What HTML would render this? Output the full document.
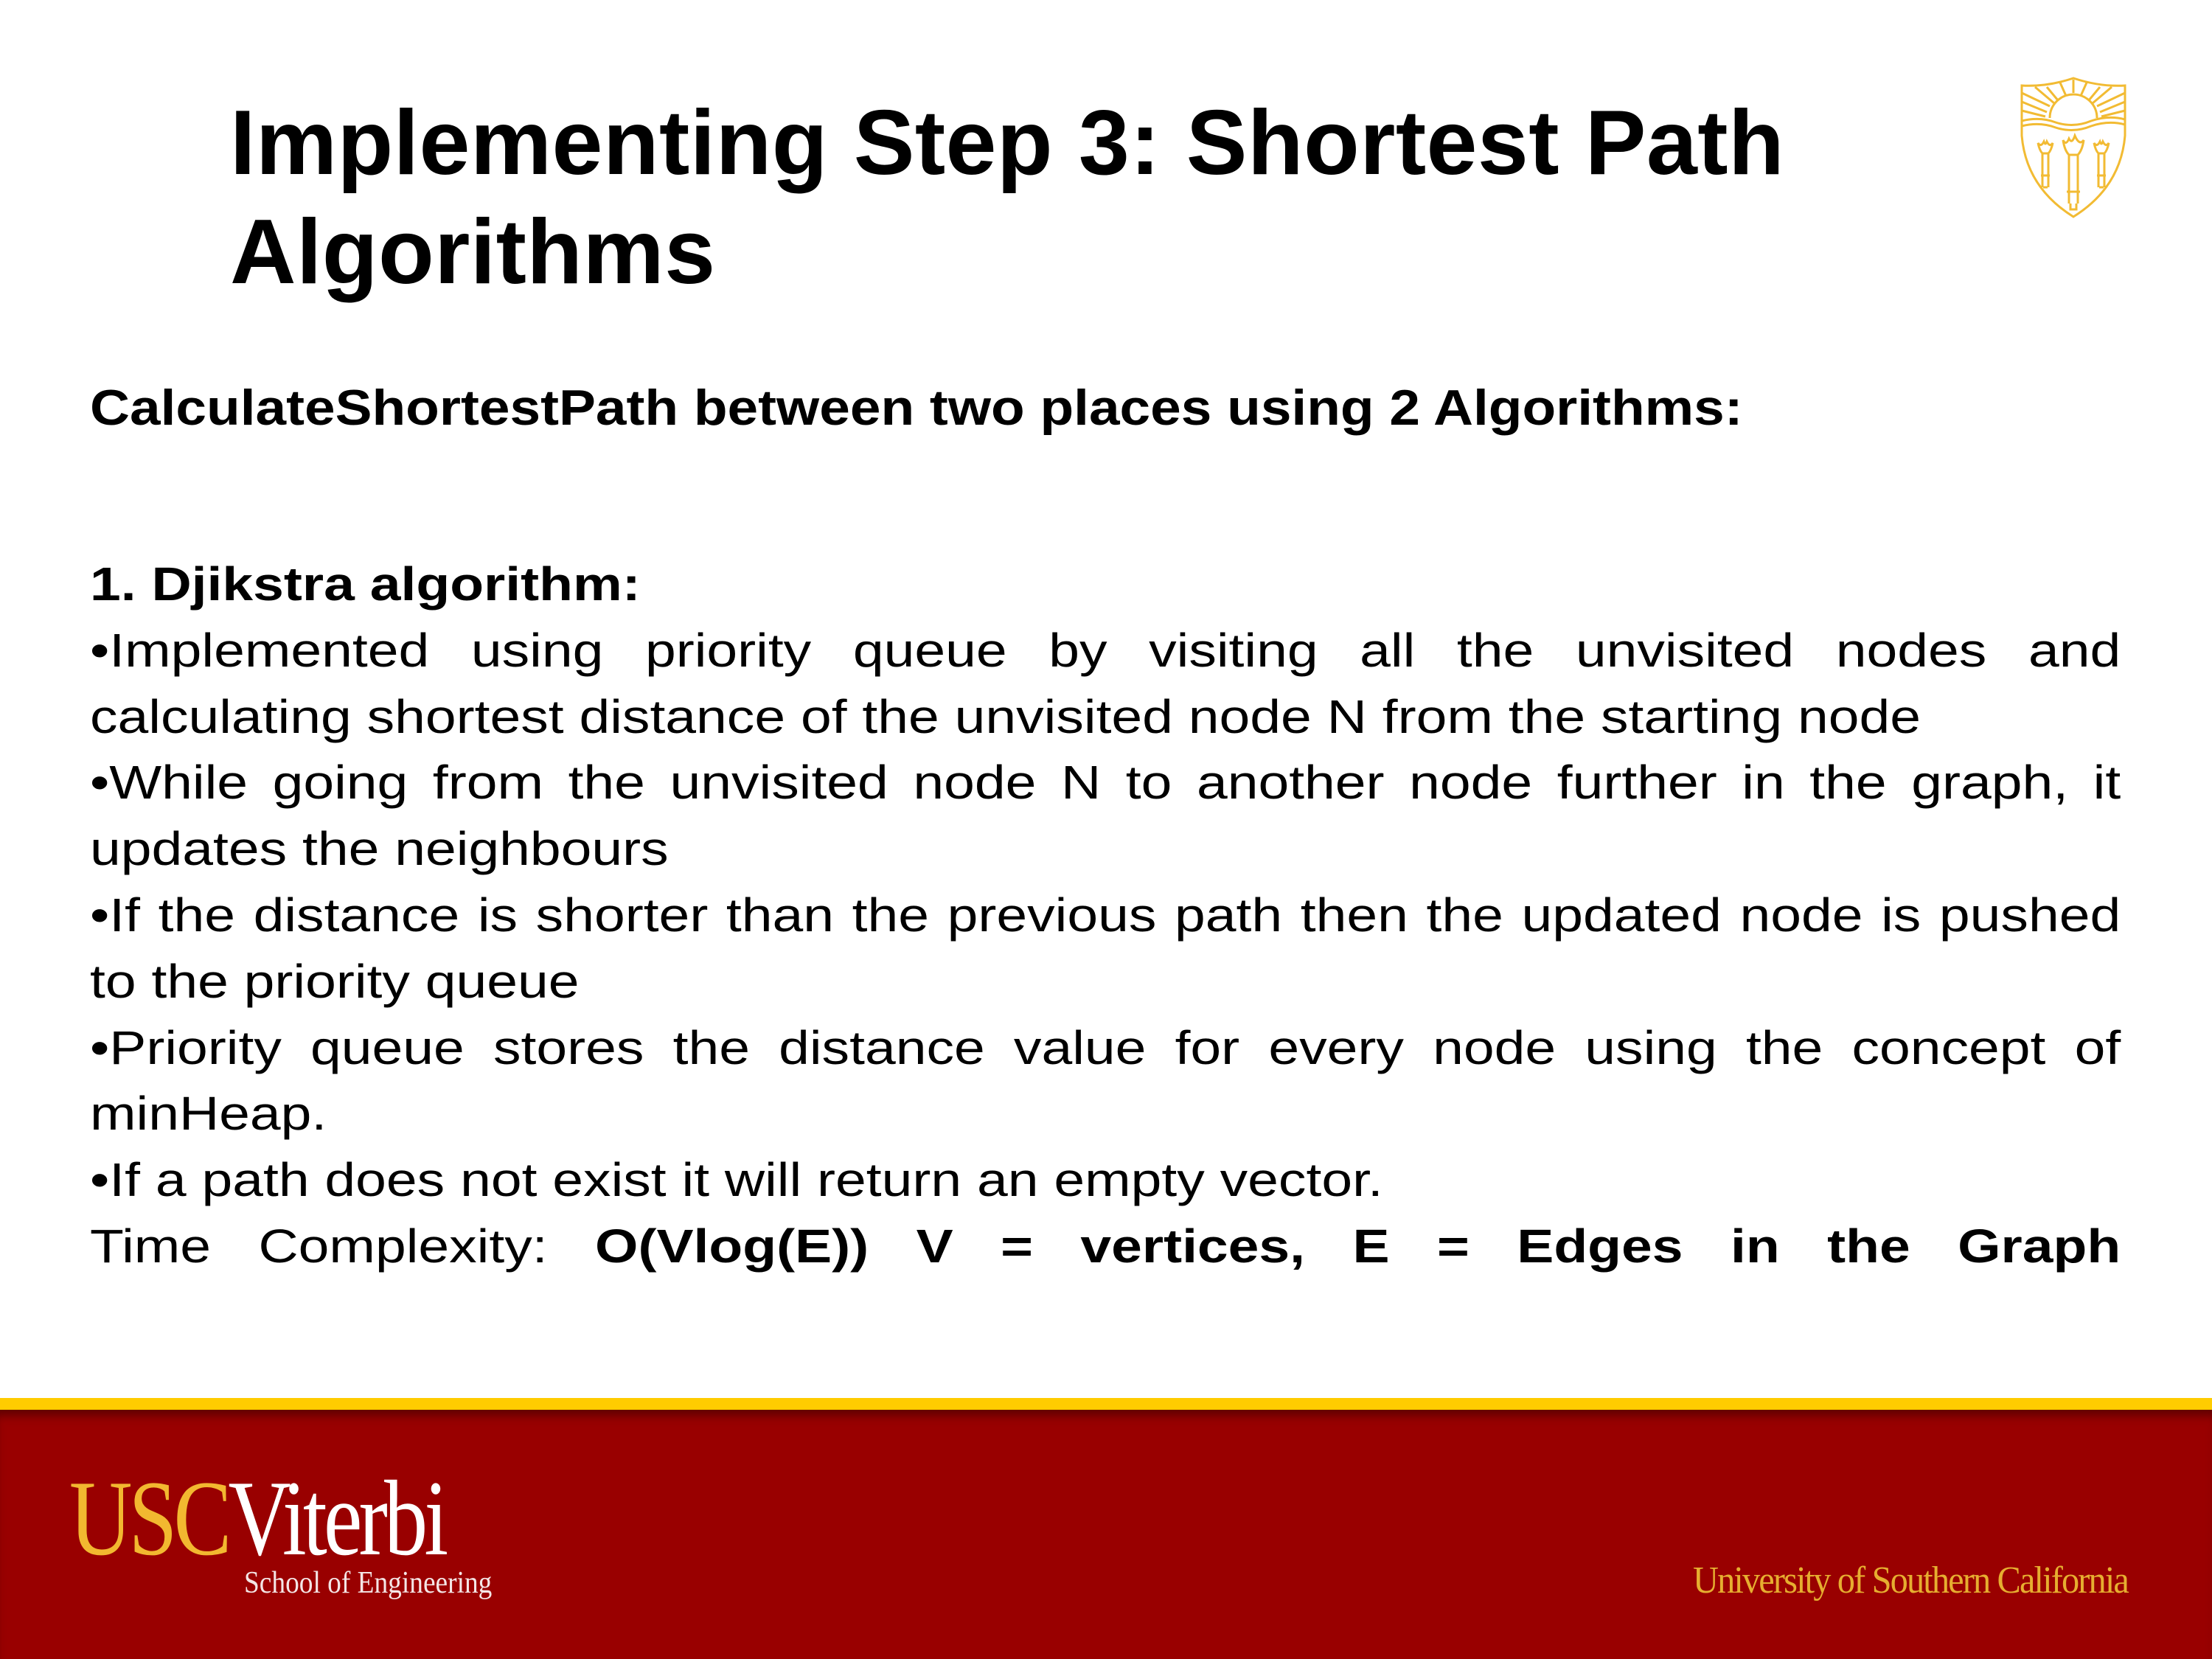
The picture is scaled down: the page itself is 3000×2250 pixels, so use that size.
<!DOCTYPE html>
<html><head><meta charset="utf-8"><style>
html,body{margin:0;padding:0;}
body{width:3000px;height:2250px;position:relative;background:#fff;overflow:hidden;font-family:"Liberation Sans",Arial,sans-serif;color:#000;}
.title{position:absolute;left:312px;top:120px;font-size:124px;font-weight:bold;line-height:148px;white-space:nowrap;letter-spacing:0.4px;}
.calc{position:absolute;left:122px;top:514px;font-size:68px;font-weight:bold;line-height:78px;white-space:nowrap;transform:scaleX(1.1);transform-origin:0 0;}
.body{position:absolute;left:122px;top:748px;width:2348px;font-size:64px;line-height:89.8px;transform:scaleX(1.173);transform-origin:0 0;}
.body p{margin:0;text-align:justify;}
.last{text-align-last:justify;}
.footer{position:absolute;left:0;top:1896px;width:3000px;height:354px;}
.yl{height:16px;background:#FFCC00;}
.red{height:338px;background:#990000;box-shadow:inset 0 14px 12px -6px rgba(60,0,0,0.6);position:relative;}
.serif{font-family:"Liberation Serif",serif;position:absolute;white-space:nowrap;transform-origin:0 0;}
</style></head><body>
<div class="title">Implementing Step 3: Shortest Path<br>Algorithms</div>
<svg style="position:absolute;left:2736px;top:104px" width="152" height="194" viewBox="0 0 152 194" fill="none" stroke="#F2BB33" stroke-width="3">
<path d="M6 12 Q40 14 76 2 Q112 14 146 12 L146 80 Q140 150 76 190 Q12 150 6 80 Z"/>
<path d="M6 60 Q30 54 52 62 Q76 70 100 60 Q124 52 146 58"/>
<path d="M6 67 Q30 61 52 69 Q76 77 100 67 Q124 59 146 65"/>
<path d="M44 56 A32 32 0 0 1 108 56"/>
<path d="M76 4 V22 M58 8 L66 26 M94 8 L86 26 M40 14 L55 32 M112 14 L97 32 M6 22 L44 40 M146 22 L108 40 M6 34 L40 48 M146 34 L112 48 M6 46 L38 54 M146 46 L114 54 M24 14 L50 36 M128 14 L102 36"/>
<path d="M28 90 Q30 100 34 104 L42 104 Q46 100 48 90 Q44 96 40 88 Q38 94 36 88 Q32 96 28 90 Z M34 104 V150 M42 104 V150 M32 134 H44 M35 150 H41"/>
<path d="M104 90 Q106 100 110 104 L118 104 Q122 100 124 90 Q120 96 116 88 Q114 94 112 88 Q108 96 104 90 Z M110 104 V150 M118 104 V150 M108 134 H120 M111 150 H117"/>
<path d="M62 86 Q64 100 70 106 L82 106 Q88 100 90 86 Q84 94 78 80 Q74 92 70 84 Q66 94 62 86 Z M70 106 V172 M82 106 V172 M67 156 H85 M72 172 V180 H80 V172"/>
</svg>
<div class="calc">CalculateShortestPath between two places using 2 Algorithms:</div>
<div class="body">
<p><b>1. Djikstra algorithm:</b></p>
<p>•Implemented using priority queue by visiting all the unvisited nodes and calculating shortest distance of the unvisited node N from the starting node</p>
<p>•While going from the unvisited node N to another node further in the graph, it updates the neighbours</p>
<p>•If the distance is shorter than the previous path then the updated node is pushed to the priority queue</p>
<p>•Priority queue stores the distance value for every node using the concept of minHeap.</p>
<p>•If a path does not exist it will return an empty vector.</p>
<p class="last">Time Complexity: <b>O(Vlog(E)) V = vertices, E = Edges in the Graph</b></p>
</div>
<div class="footer"><div class="yl"></div><div class="red">
<div class="serif" style="left:94px;top:74px;font-size:146px;line-height:1;letter-spacing:-6px;transform:scaleX(0.81)"><span style="color:#F2B830">USC</span><span style="color:#fff">Viterbi</span></div>
<div class="serif" style="left:331px;top:214px;font-size:42px;color:#f4e6e6;line-height:1;transform:scaleX(0.89)">School of Engineering</div>
<div class="serif" style="left:2296px;top:206px;font-size:52px;color:#E6AE30;line-height:1;letter-spacing:-2px;transform:scaleX(0.93)">University of Southern California</div>
</div></div>
</body></html>
